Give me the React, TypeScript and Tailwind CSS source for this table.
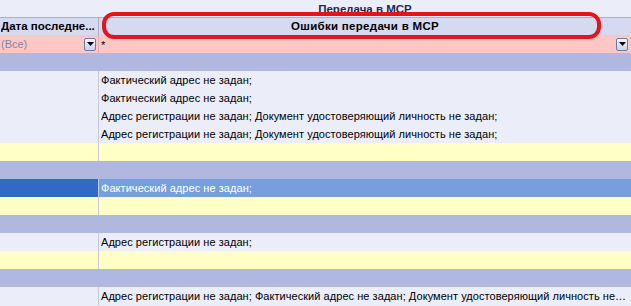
import React from "react";

type Row = { kind: "data" | "new" | "group" | "selected"; text?: string };

const rows: Row[] = [
  { kind: "group" },
  { kind: "data", text: "Фактический адрес не задан;" },
  { kind: "data", text: "Фактический адрес не задан;" },
  { kind: "data", text: "Адрес регистрации не задан; Документ удостоверяющий личность не задан;" },
  { kind: "data", text: "Адрес регистрации не задан; Документ удостоверяющий личность не задан;" },
  { kind: "new" },
  { kind: "group" },
  { kind: "selected", text: "Фактический адрес не задан;" },
  { kind: "new" },
  { kind: "group" },
  { kind: "data", text: "Адрес регистрации не задан;" },
  { kind: "new" },
  { kind: "group" },
  {
    kind: "data",
    text: "Адрес регистрации не задан; Фактический адрес не задан; Документ удостоверяющий личность не задан;",
  },
];

function DropButton() {
  return (
    <div className="flex h-[13px] w-[12px] items-center justify-center rounded-[2px] border border-[#6f7aa6] bg-gradient-to-b from-[#f4f6fc] to-[#c9d0ea]">
      <svg width="7" height="4" viewBox="0 0 7 4">
        <path d="M0 0h7L3.5 4z" fill="#000" />
      </svg>
    </div>
  );
}

function GridRow({ row }: { row: Row }) {
  if (row.kind === "group") {
    return <div className="h-[18px] bg-[#b0b8e0]" />;
  }
  const left =
    row.kind === "selected" ? "bg-[#3169c6]" : row.kind === "new" ? "bg-[#ffffc6]" : "bg-[#ebedf9]";
  const right =
    row.kind === "selected" ? "bg-[#789fdd] text-white" : row.kind === "new" ? "bg-[#ffffc6]" : "bg-[#ebedf9] text-black";
  return (
    <div className="flex h-[18px]">
      <div className={`w-[99px] shrink-0 border-r border-[#c4c8da] ${left}`} />
      <div className={`flex min-w-0 flex-1 items-center pl-[2px] pr-[2px] tracking-[0.05px] ${right}`}>
        <span className="truncate">{row.text}</span>
      </div>
    </div>
  );
}

export default function App() {
  return (
    <div
      className="relative h-[306px] w-[631px] overflow-hidden bg-[#ebedf9] text-[11px] leading-none text-black"
      style={{ fontFamily: '"Liberation Sans", Arial, sans-serif' }}
    >
      <div className="flex h-[17px]">
        <div className="w-[99px] shrink-0" />
        <div className="flex flex-1 items-center justify-center pt-[2px] text-[11.5px] font-bold text-[#1b2a55]">
          Передача в МСР
        </div>
      </div>

      <div className="flex h-[18px] border-t border-[#a9b0cc] bg-[#d5daf0] text-[11.5px] font-bold">
        <div className="flex w-[99px] shrink-0 items-center border-r border-[#a9b0cc] pl-[1px]">
          <span className="truncate">Дата последне...</span>
        </div>
        <div className="flex flex-1 items-center justify-center tracking-[0.3px]">Ошибки передачи в МСР</div>
      </div>

      <div className="flex h-[18px] bg-[#ffc6c6]">
        <div className="flex w-[99px] shrink-0 items-center justify-between border-r border-[#d8b0b8] pl-[1px] pr-[2px] text-[#8088a8]">
          <span>(Все)</span>
          <DropButton />
        </div>
        <div className="flex flex-1 items-center justify-between pl-[2px] pr-[3px]">
          <span className="pt-[2px]">*</span>
          <DropButton />
        </div>
      </div>

      {rows.map((row, i) => (
        <GridRow key={i} row={row} />
      ))}

      <div className="pointer-events-none absolute left-[102px] top-[12px] h-[27px] w-[499px] rounded-[12px] border-[4px] border-[#e3141c]" />
    </div>
  );
}
